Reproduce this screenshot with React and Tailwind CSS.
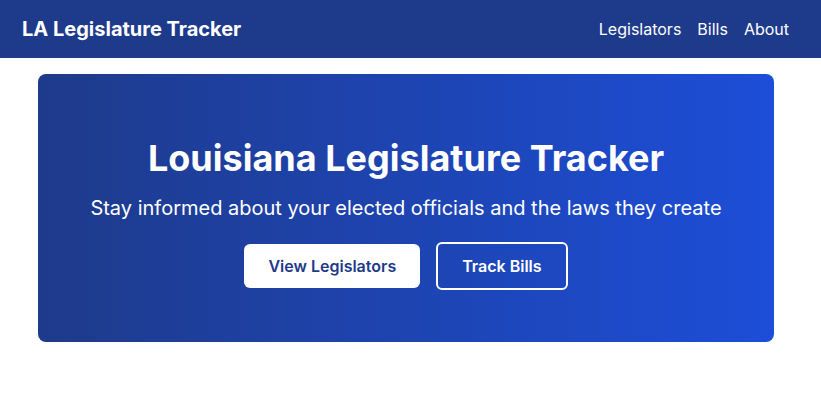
export default function App() {
  return (
    <div className="min-h-screen bg-white font-['Inter',sans-serif]">
      <nav className="h-[58px] bg-[#1e3a8a] flex items-center justify-between pl-[22px] pr-[32px]">
        <span className="text-xl font-bold text-white">LA Legislature Tracker</span>
        <div className="flex items-center gap-4 text-base text-white">
          <a href="#">Legislators</a>
          <a href="#">Bills</a>
          <a href="#">About</a>
        </div>
      </nav>

      <main className="pt-4 pl-[38px] pr-[47px]">
        {/* Hero */}
        <section className="rounded-lg bg-[linear-gradient(to_right,#1e3a8a,#1d4ed8)] pt-16 pb-[52px] text-center text-white">
          <h1 className="text-4xl font-bold mb-4">Louisiana Legislature Tracker</h1>
          <p className="text-xl mb-5">Stay informed about your elected officials and the laws they create</p>
          <div className="flex items-center justify-center gap-4">
            <button className="bg-white text-[#1e3a8a] font-semibold px-6 py-2.5 rounded-md">
              View Legislators
            </button>
            <button className="border-2 border-white text-white font-semibold px-6 py-2.5 rounded-md">
              Track Bills
            </button>
          </div>
        </section>
      </main>
    </div>
  )
}
